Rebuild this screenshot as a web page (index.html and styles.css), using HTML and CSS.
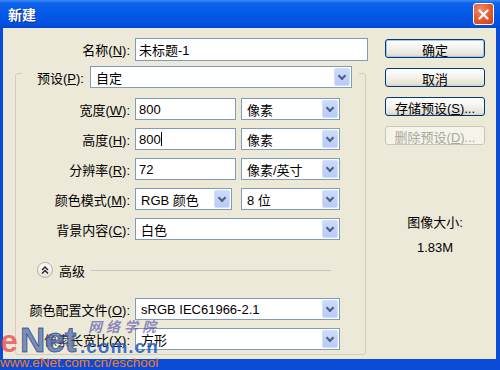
FILE: index.html
```html
<!DOCTYPE html>
<html lang="zh-CN">
<head>
  <meta charset="UTF-8" />
  <title>新建</title>
  <link rel="stylesheet" href="styles.css">
</head>
<body>
  <div class="window">
    <!-- 标题栏 -->
    <div class="titlebar">
      <span class="title">新建</span>
      <button class="close">
        <svg width="11" height="11" viewBox="0 0 11 11"><path d="M1.5 1.5l8 8M9.5 1.5l-8 8" stroke="#fff" stroke-width="2.2" stroke-linecap="round"/></svg>
      </button>
    </div>

    <div class="client">
      <!-- 左侧表单 -->
      <div class="form">
        <div class="row row-name">
          <label class="label label-top">名称(<u>N</u>):</label>
          <div class="field field-name">未标题-1</div>
        </div>

        <div class="group">
          <div class="group-head">
            <label class="head-label">预设(<u>P</u>):</label>
            <div class="select select-preset">自定<span class="arrow"></span></div>
          </div>

          <div class="group-body">
            <div class="row">
              <label class="label">宽度(<u>W</u>):</label>
              <div class="field field-num">800</div>
              <div class="select select-unit">像素<span class="arrow"></span></div>
            </div>
            <div class="row">
              <label class="label">高度(<u>H</u>):</label>
              <div class="field field-num">800<span class="caret"></span></div>
              <div class="select select-unit">像素<span class="arrow"></span></div>
            </div>
            <div class="row">
              <label class="label">分辨率(<u>R</u>):</label>
              <div class="field field-num">72</div>
              <div class="select select-unit">像素/英寸<span class="arrow"></span></div>
            </div>
            <div class="row">
              <label class="label">颜色模式(<u>M</u>):</label>
              <div class="select select-mode">RGB 颜色<span class="arrow"></span></div>
              <div class="select select-unit select-bits">8 位<span class="arrow"></span></div>
            </div>
            <div class="row">
              <label class="label">背景内容(<u>C</u>):</label>
              <div class="select select-wide">白色<span class="arrow"></span></div>
            </div>

            <div class="advanced">
              <span class="adv-btn">
                <svg width="8" height="8" viewBox="0 0 8 8"><path d="M1 4l3-3 3 3M1 7.5l3-3 3 3" fill="none" stroke="#222" stroke-width="1.4"/></svg>
              </span>
              <span class="adv-text">高级</span>
              <span class="adv-line"></span>
            </div>

            <div class="row row-profile">
              <label class="label">颜色配置文件(<u>O</u>):</label>
              <div class="select select-wide">sRGB IEC61966-2.1<span class="arrow"></span></div>
            </div>
            <div class="row">
              <label class="label">像素长宽比(<u>X</u>):</label>
              <div class="select select-wide">方形<span class="arrow"></span></div>
            </div>
          </div>
        </div>
      </div>

      <!-- 右侧按钮 -->
      <div class="side">
        <button class="btn btn-default">确定</button>
        <button class="btn">取消</button>
        <button class="btn">存储预设(<u>S</u>)...</button>
        <button class="btn" disabled>删除预设(<u>D</u>)...</button>

        <div class="size-info">
          <div>图像大小:</div>
          <div>1.83M</div>
        </div>
      </div>
    </div>

    <!-- 水印 -->
    <div class="watermark">
      <span class="wm-e">e</span>
      <span class="wm-net">Net</span>
      <span class="wm-cn">网络学院</span>
      <span class="wm-com">.com.cn</span>
      <span class="wm-url">www.eNet.com.cn/eschool</span>
    </div>
  </div>
</body>
</html>
```

FILE: styles.css
```css
* {
  box-sizing: border-box;
}

body {
  margin: 0;
  font-family: "Liberation Sans", "Noto Sans CJK SC", sans-serif;
  font-size: 13px;
  color: #000;
  background: #fff;
}

.window {
  position: relative;
  width: 500px;
  height: 370px;
  overflow: hidden;
  display: flex;
  flex-direction: column;
  background: #0a4cd8;
}

/* 标题栏 */
.titlebar {
  height: 28px;
  flex-shrink: 0;
  display: flex;
  align-items: center;
  justify-content: space-between;
  padding: 0 6px 0 8px;
  background: linear-gradient(#3b8ef7 0, #0e62ea 3px, #0459e8 45%, #0252e1 85%, #0347cf 100%);
}

.title {
  color: #fff;
  font-weight: bold;
  font-size: 14px;
  text-shadow: 1px 1px 0 #0a2a9a;
}

.close {
  width: 21px;
  height: 22px;
  padding: 0;
  border: 1px solid #fff;
  border-radius: 3px;
  background: radial-gradient(circle at 35% 30%, #f08a68 0, #e2582f 55%, #c9401c 100%);
  display: flex;
  align-items: center;
  justify-content: center;
}

/* 主体 */
.client {
  flex: 1;
  display: flex;
  margin: 0 4px 11px 3px;
  background: #ece9d8;
}

.form {
  width: 367px;
  padding-top: 10px;
}

.row {
  display: flex;
  align-items: center;
  height: 22px;
}

.row + .row {
  margin-top: 8px;
}

.row-name {
  height: 23px;
}

.label {
  width: 114px;
  margin-right: 5px;
  text-align: right;
  white-space: nowrap;
}

.label-top {
  width: 127px;
}

.field,
.select {
  position: relative;
  height: 100%;
  border: 1px solid #7f9db9;
  background: #fff;
  padding-left: 3px;
  display: flex;
  align-items: center;
  white-space: nowrap;
}

.field-name {
  width: 233px;
}

.field-num {
  width: 101px;
  margin-right: 5px;
}

.caret {
  display: inline-block;
  width: 1px;
  height: 14px;
  background: #000;
}

.select {
  padding-left: 5px;
}

.select-unit {
  width: 99px;
}

.select-mode {
  width: 97px;
  margin-right: 9px;
}

.select-wide {
  width: 205px;
}

.select-preset {
  width: 262px;
}

.arrow {
  position: absolute;
  top: 1px;
  right: 1px;
  bottom: 1px;
  width: 16px;
  border: 1px solid #d2defa;
  border-radius: 2px;
  background: linear-gradient(#cddbfc, #b6cbf6);
  display: flex;
  align-items: center;
  justify-content: center;
}

.arrow::after {
  content: "";
  width: 4px;
  height: 4px;
  margin-top: -3px;
  border-right: 2px solid #4d6185;
  border-bottom: 2px solid #4d6185;
  transform: rotate(45deg);
}

/* 分组框 */
.group {
  width: 351px;
  margin: 12px 0 0 12px;
  border: 1px solid #d0d0bf;
  border-radius: 3px;
  padding-bottom: 4px;
}

.group-head {
  display: flex;
  align-items: center;
  width: fit-content;
  height: 22px;
  margin: -8px 0 0 6px;
  padding: 0 7px 0 15px;
  background: #ece9d8;
}

.head-label {
  margin-right: 6px;
}

.group-body {
  padding-top: 10px;
}

.advanced {
  display: flex;
  align-items: center;
  height: 16px;
  margin: 22px 34px 0 21px;
}

.adv-btn {
  width: 16px;
  height: 16px;
  border: 1px solid #b4b2a4;
  border-radius: 50%;
  background: linear-gradient(#ffffff, #e4e2d8);
  display: flex;
  align-items: center;
  justify-content: center;
}

.adv-text {
  margin: 0 6px;
}

.adv-line {
  flex: 1;
  height: 1px;
  background: #c8c6b8;
}

.row-profile {
  margin-top: 20px;
}

/* 右侧按钮 */
.side {
  width: 100px;
  margin-left: 15px;
  padding-top: 11px;
  display: flex;
  flex-direction: column;
}

.btn {
  height: 19px;
  padding: 0;
  font: inherit;
  color: #000;
  border: 1px solid #003c74;
  border-radius: 3px;
  background: linear-gradient(#ffffff 0, #f4f3ee 45%, #e6e3d8 85%, #d6d0c5 100%);
}

.btn + .btn {
  margin-top: 10px;
}

.btn-default {
  box-shadow: inset 0 0 0 1px #a8c4ef;
}

.btn:disabled {
  color: #aca899;
  border-color: #c9c7ba;
  background: #f5f4ea;
}

.size-info {
  margin-top: 70px;
  text-align: center;
  line-height: 15px;
}

.size-info div + div {
  margin-top: 10px;
}

/* 水印 */
.watermark span {
  position: absolute;
  line-height: 1;
  font-weight: bold;
  white-space: nowrap;
}

.wm-e {
  left: 0;
  top: 325px;
  font-size: 32px;
  color: rgba(232, 78, 78, 0.8);
}

.wm-net {
  left: 20px;
  top: 322px;
  font-size: 35px;
  color: rgba(75, 105, 165, 0.72);
  -webkit-text-stroke: 1px rgba(30, 55, 120, 0.7);
  text-shadow: 0 0 4px rgba(255, 255, 255, 0.6);
}

.wm-cn {
  left: 88px;
  top: 320px;
  font-size: 14px;
  letter-spacing: 4px;
  font-style: italic;
  color: rgba(70, 70, 165, 0.6);
}

.wm-com {
  left: 80px;
  top: 337px;
  font-size: 19px;
  letter-spacing: 1px;
  color: rgba(30, 90, 200, 0.85);
}

.wm-url {
  left: 0;
  top: 356px;
  font-size: 13.5px;
  font-weight: normal !important;
  color: #f47b20;
}
```
